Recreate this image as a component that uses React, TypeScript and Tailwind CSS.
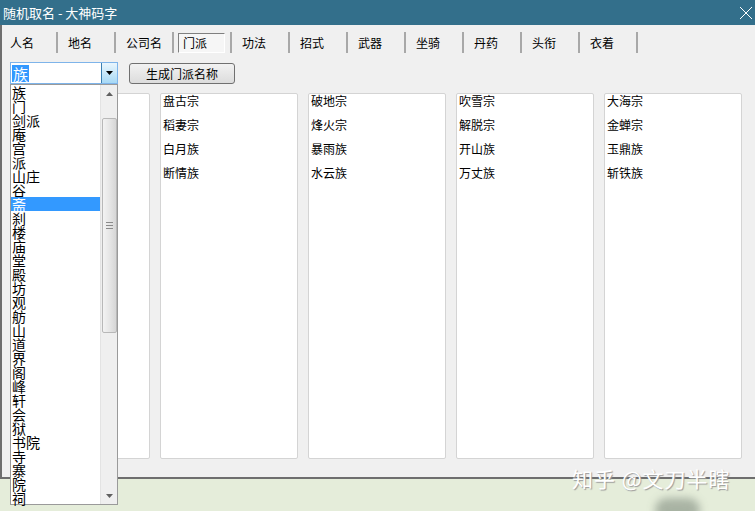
import React from "react";

const tabs = ["人名", "地名", "公司名", "门派", "功法", "招式", "武器", "坐骑", "丹药", "头衔", "衣着"];
const cols: string[][] = [
  [],
  ["盘古宗", "稻妻宗", "白月族", "断情族"],
  ["破地宗", "烽火宗", "暴雨族", "水云族"],
  ["吹雪宗", "解脱宗", "开山族", "万丈族"],
  ["大海宗", "金蝉宗", "玉鼎族", "斩铁族"],
];
const items = ["族", "门", "剑派", "庵", "宫", "派", "山庄", "谷", "斋", "刹", "楼", "庙", "堂", "殿", "坊", "观", "舫", "山", "道", "界", "阁", "峰", "轩", "会", "狱", "书院", "寺", "寨", "院", "祠"];

const font = { fontFamily: '"Noto Sans CJK SC", "Noto Sans", sans-serif' };

export default function App() {
  return (
    <div className="relative w-[755px] h-[511px] overflow-hidden bg-[#e5edda] flex flex-col text-black" style={font}>
      {/* Title bar */}
      <div className="h-[25px] bg-[#336f8b] flex items-center justify-between shrink-0">
        <span className="pl-[3px] text-[13px] leading-none text-white">随机取名 - 大神码字</span>
        <svg width="14" height="14" viewBox="0 0 14 14" className="mr-[2px]">
          <path d="M1 1 L13 13 M13 1 L1 13" stroke="#ffffff" strokeWidth="1" />
        </svg>
      </div>
      {/* Window body */}
      <div className="h-[454px] bg-[#f0f0f0] border-l-2 border-b-2 border-[#6e6e6e] flex flex-col shrink-0">
        {/* Tabs */}
        <div className="flex mt-[7px] h-[21px] -ml-[2px]">
          {tabs.map((t, i) => (
            <div key={t} className="w-[58px] h-[21px] border-r-2 border-[#a8a8a8] flex items-center text-[12px] leading-none">
              {i === 3 ? (
                <div className="ml-[4px] w-[47px] h-[20px] border-t border-l border-[#808080] border-b border-r border-b-white border-r-white bg-[#f6f6f6] flex items-center pl-[4px]">
                  {t}
                </div>
              ) : (
                <span className="pl-[10px]">{t}</span>
              )}
            </div>
          ))}
        </div>
        {/* Combo row */}
        <div className="flex mt-[9px] h-[22px] pl-[8px]">
          <div className="w-[108px] h-[22px] border border-[#7eb4ea] bg-white flex items-center">
            <span className="ml-[1px] h-[17px] px-[1px] bg-[#3399ff] text-white text-[15px] leading-[17px]">族</span>
            <div className="ml-auto w-[16px] h-[20px] border-l border-[#3c7fb1] bg-gradient-to-b from-[#eaf6fd] to-[#a7d9f5] flex items-center justify-center">
              <svg width="7" height="4" viewBox="0 0 7 4"><path d="M0 0 L7 0 L3.5 4 Z" fill="#000" /></svg>
            </div>
          </div>
          <button className="ml-[11px] mt-[1px] w-[106px] h-[21px] rounded-[3px] border border-[#707070] bg-gradient-to-b from-[#f2f2f2] to-[#dcdcdc] text-[12px] leading-none flex items-center justify-center">
            生成门派名称
          </button>
        </div>
        {/* Columns */}
        <div className="flex gap-[10px] mt-[9px] pl-[10px] h-[366px]">
          {cols.map((c, i) => (
            <div key={i} className="w-[138px] h-[366px] bg-white border border-[#d4d4d4] rounded-[2px] pl-[2px]">
              {c.map((s) => (
                <div key={s} className="h-[24px] text-[12px] leading-[14px]">{s}</div>
              ))}
            </div>
          ))}
        </div>
      </div>

      {/* Dropdown list overlay */}
      <div className="absolute left-[10px] top-[84px] w-[108px] h-[421px] bg-white border border-[#9a9a9a] flex">
        <div className="flex-1 flex flex-col">
          {items.map((s, i) => (
            <div
              key={i}
              className={
                "h-[14px] text-[14px] leading-[14px] pl-[1px] whitespace-nowrap " +
                (i === 8 ? "bg-[#3399ff] text-white" : "")
              }
            >
              {s}
            </div>
          ))}
        </div>
        <div className="w-[17px] h-full bg-[#efefef] border-l border-[#e3e3e3] flex flex-col items-center">
          <div className="h-[17px] w-full flex items-center justify-center">
            <svg width="7" height="4" viewBox="0 0 7 4"><path d="M0 4 L7 4 L3.5 0 Z" fill="#606060" /></svg>
          </div>
          <div className="mt-[16px] w-[15px] h-[215px] rounded-[2px] border border-[#b8b8b8] bg-gradient-to-r from-[#f3f3f3] via-[#e6e6e6] to-[#d6d6d6] flex flex-col items-center justify-center gap-[2px]">
            <div className="w-[7px] h-px bg-[#8a8a8a]" />
            <div className="w-[7px] h-px bg-[#8a8a8a]" />
            <div className="w-[7px] h-px bg-[#8a8a8a]" />
          </div>
          <div className="mt-auto h-[17px] w-full flex items-center justify-center">
            <svg width="7" height="4" viewBox="0 0 7 4"><path d="M0 0 L7 0 L3.5 4 Z" fill="#606060" /></svg>
          </div>
        </div>
      </div>

      {/* ink blob */}
      <div className="absolute left-[655px] top-[498px] w-[45px] h-[24px] rounded-full bg-[#9aa596] blur-[4px] opacity-80" />

      {/* Watermark */}
      <div
        className="absolute left-[572px] top-[464px] text-[21px] leading-[28px] text-white whitespace-nowrap tracking-[1px]"
        style={{ textShadow: "1px 1px 1px #9a9a9a" }}
      >
        知乎 @文刀半瞎
      </div>
    </div>
  );
}
